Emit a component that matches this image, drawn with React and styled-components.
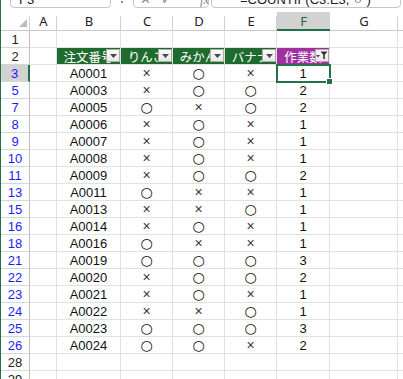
import React from "react";
import styled, { createGlobalStyle, css } from "styled-components";

const GREEN = "#217346";
const GRID = "#e1e1e1";

const GlobalStyle = createGlobalStyle`
  html, body { margin: 0; padding: 0; background: #fff; }
  body { overflow: hidden; font-family: "Liberation Sans", "Noto Sans CJK JP", sans-serif; }
`;

const Window = styled.div`
  width: 403px;
  height: 379px;
  box-sizing: border-box;
  overflow: hidden;
  border-left: 1px solid ${GREEN};
  background: #fff;
`;

const FormulaBar = styled.div`
  height: 12px;
  display: flex;
  align-items: flex-start;
  overflow: hidden;
`;

const Field = styled.div`
  box-sizing: border-box;
  flex: none;
  height: 22px;
  margin-top: -14px;
  margin-left: ${(p) => p.$gap}px;
  width: ${(p) => p.$w}px;
  padding: 4px 0 0 ${(p) => p.$pad}px;
  border: 1px solid #c6c6c6;
  border-radius: 4px;
  font-family: "Liberation Sans", sans-serif;
  font-size: 13px;
  line-height: 18px;
  color: #222;
  white-space: nowrap;
  overflow: hidden;
  display: flex;
  gap: 10px;
`;

const Dot = styled.span`
  flex: none;
  width: 2px;
  height: 2px;
  margin: 1px 0 0 10px;
  background: #666;
  border-radius: 1px;
`;

const Fx = styled.span`
  color: #888;
  font-style: ${(p) => (p.$italic ? "italic" : "normal")};
  font-family: ${(p) => (p.$italic ? '"Liberation Serif", serif' : "inherit")};
  margin-left: ${(p) => p.$ml || 0}px;
`;

const Sheet = styled.div`
  display: grid;
  width: max-content;
  grid-template-columns: 29px 27px 64px 52px 52px 52px 53px 68px 68px;
  grid-template-rows: 19px;
  grid-auto-rows: 17px;
`;

const ColHead = styled.div`
  box-sizing: border-box;
  display: flex;
  align-items: center;
  justify-content: center;
  font-family: "Noto Sans", "Liberation Sans", sans-serif;
  font-size: 13px;
  line-height: 16px;
  color: #222;
  border-bottom: 1px solid #c8c8c8;
  background: linear-gradient(#d0d0d0, #d0d0d0) right bottom / 1px 14px no-repeat;
  ${(p) =>
    p.$active &&
    css`
      background: #d2d2d2;
      color: #1e6b41;
      border-bottom: 2px solid ${GREEN};
    `}
`;

const Corner = styled(ColHead)`
  align-items: flex-end;
  justify-content: flex-end;
  padding: 0 3px 3px 0;
`;

const SelectAll = styled.span`
  width: 0;
  height: 0;
  border-left: 8px solid transparent;
  border-bottom: 8px solid #bcbcbc;
`;

const RowHead = styled.div`
  box-sizing: border-box;
  display: flex;
  align-items: center;
  justify-content: center;
  font-family: "Liberation Sans", sans-serif;
  font-size: 13px;
  line-height: 15px;
  color: ${(p) => (p.$filtered ? "#1c1cff" : "#222")};
  border-right: 1px solid #bdbdbd;
  border-bottom: 1px solid #d6d6d6;
  ${(p) =>
    p.$active &&
    css`
      background: #d2d2d2;
      border-right: 2px solid ${GREEN};
    `}
`;

const Cell = styled.div`
  box-sizing: border-box;
  position: relative;
  display: flex;
  align-items: center;
  justify-content: center;
  border-right: 1px solid ${GRID};
  border-bottom: 1px solid ${GRID};
  font-family: "Liberation Sans", sans-serif;
  font-size: 13px;
  line-height: 15px;
  color: #111;
  white-space: nowrap;
  ${(p) =>
    p.$selected &&
    css`
      z-index: 1;
      outline: 2px solid ${GREEN};
      outline-offset: -1px;
      &::after {
        content: "";
        position: absolute;
        right: -4px;
        bottom: -4px;
        width: 5px;
        height: 5px;
        background: ${GREEN};
        border: 1px solid #fff;
      }
    `}
`;

const HeadCell = styled(Cell)`
  overflow: hidden;
  background: ${(p) => p.$fill};
  color: #fff;
  font-family: "Noto Sans CJK JP", sans-serif;
  font-size: 12.5px;
`;

const FilterButton = styled.span`
  position: absolute;
  top: 1px;
  right: 0;
  width: 14px;
  height: 13px;
  box-sizing: border-box;
  display: flex;
  align-items: center;
  justify-content: center;
  background: linear-gradient(#fafafa, #e9e9e9);
  border: 1px solid #ababab;
`;

const Mark = styled.span`
  font-family: ${(p) =>
    p.$kind === "x" ? '"Liberation Sans", sans-serif' : '"DejaVu Sans", sans-serif'};
  font-size: 14px;
  line-height: 14px;
  color: ${(p) => (p.$kind === "x" ? "#3a3a3a" : "#111")};
`;

const rows = [
  [3, "A0001", "xox"],
  [5, "A0003", "xoo"],
  [7, "A0005", "oxo"],
  [8, "A0006", "xox"],
  [9, "A0007", "xox"],
  [10, "A0008", "xox"],
  [11, "A0009", "xoo"],
  [13, "A0011", "oxx"],
  [15, "A0013", "xxo"],
  [16, "A0014", "xox"],
  [18, "A0016", "oxx"],
  [21, "A0019", "ooo"],
  [22, "A0020", "xoo"],
  [23, "A0021", "xox"],
  [24, "A0022", "xxo"],
  [25, "A0023", "ooo"],
  [26, "A0024", "oox"],
];

const headers = [
  ["注文番号", "#1f6b2d"],
  ["りんご", "#1f6b2d"],
  ["みかん", "#1f6b2d"],
  ["バナナ", "#1f6b2d"],
  ["作業数", "#a030a0"],
];

const Arrow = () => (
  <svg width="7" height="4" viewBox="0 0 7 4">
    <path d="M0 0h7L3.5 4z" fill="#474747" />
  </svg>
);

const Funnel = () => (
  <svg width="12" height="9" viewBox="0 0 12 9">
    <path d="M0 4h4L2 6.5z" fill="#474747" />
    <path d="M4.5 0.5h7L8.8 3.8V8.5L7.2 7.6V3.8z" fill="#333" />
  </svg>
);

const Blank = ({ n }) =>
  Array.from({ length: n }, (_, i) => <Cell key={`b${i}`} />);

const App = () => (
  <Window>
    <GlobalStyle />
    <FormulaBar>
      <Field $gap={9} $w={101} $pad={8}>
        F3
      </Field>
      <Dot />
      <Field $gap={10} $w={76} $pad={6}>
        <Fx>✕</Fx>
        <Fx>✓</Fx>
        <Fx $italic $ml={18}>
          fx
        </Fx>
      </Field>
      <Field $gap={2} $w={190} $pad={28}>
        =COUNTIF(C3:E3,"○")
      </Field>
    </FormulaBar>

    <Sheet>
      <Corner>
        <SelectAll />
      </Corner>
      {["A", "B", "C", "D", "E", "F", "G", "H"].map((c) => (
        <ColHead key={c} $active={c === "F"}>
          {c}
        </ColHead>
      ))}

      <RowHead>1</RowHead>
      <Blank n={8} />

      <RowHead>2</RowHead>
      <Cell />
      {headers.map(([label, fill], i) => (
        <HeadCell key={label} $fill={fill}>
          {label}
          <FilterButton>{i === 4 ? <Funnel /> : <Arrow />}</FilterButton>
        </HeadCell>
      ))}
      <Blank n={2} />

      {rows.map(([num, id, marks]) => (
        <React.Fragment key={num}>
          <RowHead $filtered $active={num === 3}>
            {num}
          </RowHead>
          <Cell />
          <Cell>{id}</Cell>
          {marks.split("").map((m, i) => (
            <Cell key={i}>
              <Mark $kind={m}>{m === "x" ? "×" : "○"}</Mark>
            </Cell>
          ))}
          <Cell $selected={num === 3}>
            {marks.split("").filter((m) => m === "o").length}
          </Cell>
          <Blank n={2} />
        </React.Fragment>
      ))}

      <RowHead>28</RowHead>
      <Blank n={8} />
      <RowHead>29</RowHead>
      <Blank n={8} />
    </Sheet>
  </Window>
);

export default App;
